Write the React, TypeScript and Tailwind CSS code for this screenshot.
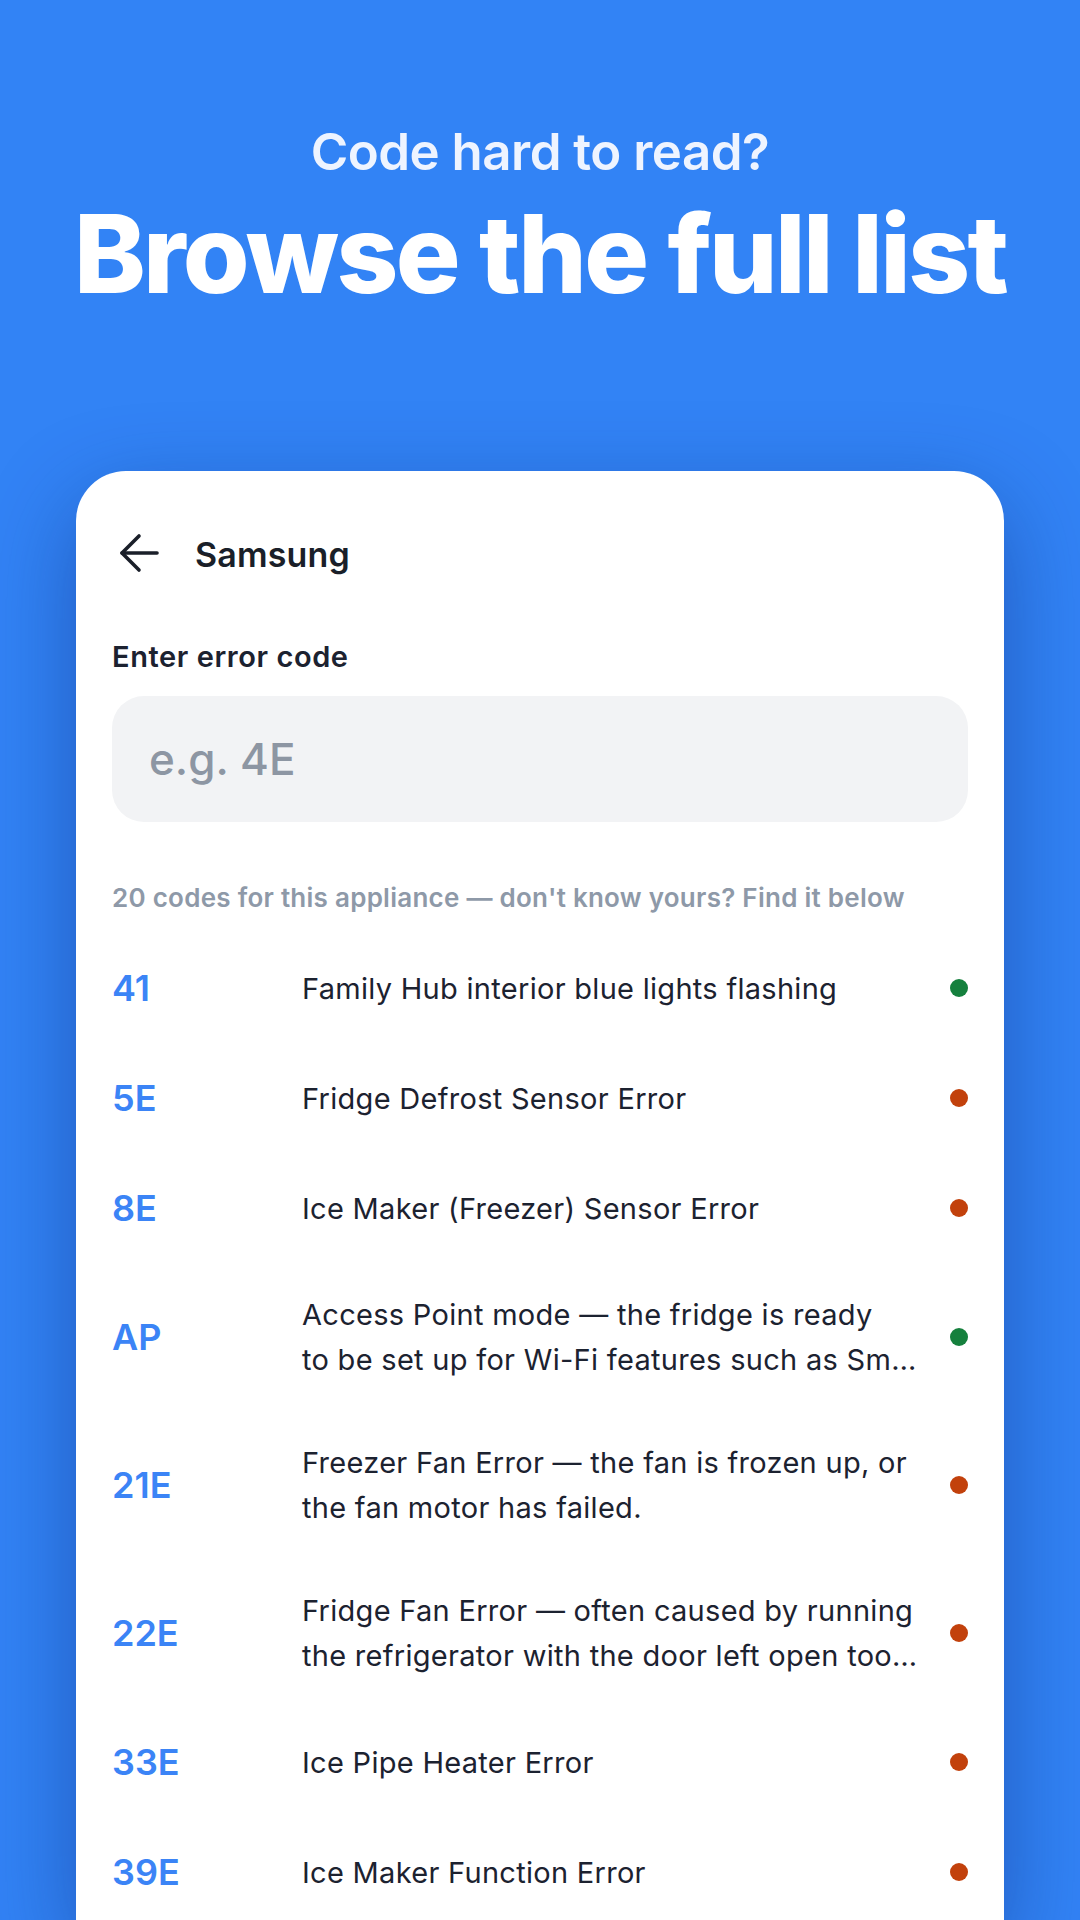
import React from "react";

type Row = { code: string; lines: string[]; ok: boolean };

const rows: Row[] = [
  { code: "41", lines: ["Family Hub interior blue lights flashing"], ok: true },
  { code: "5E", lines: ["Fridge Defrost Sensor Error"], ok: false },
  { code: "8E", lines: ["Ice Maker (Freezer) Sensor Error"], ok: false },
  {
    code: "AP",
    lines: ["Access Point mode — the fridge is ready", "to be set up for Wi-Fi features such as Sm…"],
    ok: true,
  },
  {
    code: "21E",
    lines: ["Freezer Fan Error — the fan is frozen up, or", "the fan motor has failed."],
    ok: false,
  },
  {
    code: "22E",
    lines: ["Fridge Fan Error — often caused by running", "the refrigerator with the door left open too…"],
    ok: false,
  },
  { code: "33E", lines: ["Ice Pipe Heater Error"], ok: false },
  { code: "39E", lines: ["Ice Maker Function Error"], ok: false },
];

export default function App() {
  return (
    <div className="w-[1080px] h-[1920px] overflow-hidden bg-[#3283f5] flex flex-col items-center font-['Inter',sans-serif]">
      <p className="mt-[122px] text-[51px] leading-[60px] font-semibold text-[#eef4ff] tracking-[-0.01em]">
        Code hard to read?
      </p>
      <h1 className="mt-[12px] text-[108px] leading-[120px] font-extrabold text-white tracking-[-0.024em] whitespace-nowrap">
        Browse the full list
      </h1>
      <div className="mt-[157px] w-[928px] flex-1 rounded-t-[50px] bg-white shadow-[0_30px_90px_rgba(10,40,120,0.45)] px-[36px] pt-[60px] flex flex-col">
        <div className="flex items-center h-[48px]">
          <svg width="48" height="48" viewBox="0 0 48 48" fill="none" stroke="#1a1f29" strokeWidth="3.6" strokeLinecap="round" strokeLinejoin="round">
            <path d="M10 22 H45" />
            <path d="M27 5 L10 22 L27 39" />
          </svg>
          <span className="ml-[35px] text-[34px] font-semibold text-[#1a1f29] leading-[48px] tracking-[0.005em]">Samsung</span>
        </div>
        <p className="mt-[60px] text-[29px] leading-[36px] font-semibold text-[#1c2230] tracking-[0.02em]">Enter error code</p>
        <div className="mt-[21px] h-[126px] rounded-[32px] bg-[#f2f3f5] flex items-center pl-[37px]">
          <span className="text-[44px] font-medium text-[#8d96a3]">e.g. 4E</span>
        </div>
        <p className="mt-[59px] text-[26px] leading-[34px] font-semibold text-[#8e99a8] whitespace-nowrap tracking-[0.01em]">
          20 codes for this appliance — don't know yours? Find it below
        </p>
        <div className="mt-[18px] flex flex-col">
          {rows.map((r) => (
            <div key={r.code} className="flex items-center py-[29px]">
              <span className="w-[190px] shrink-0 text-[36px] leading-[52px] font-semibold text-[#3b84f6]">{r.code}</span>
              <div className="flex-1 flex flex-col text-[29px] leading-[45px] text-[#1c2230] whitespace-nowrap tracking-[0.01em]">
                {r.lines.map((l, i) => (
                  <span key={i}>{l}</span>
                ))}
              </div>
              <span className={`ml-[20px] w-[18px] h-[18px] rounded-full shrink-0 ${r.ok ? "bg-[#15803d]" : "bg-[#c2410c]"}`} />
            </div>
          ))}
        </div>
      </div>
    </div>
  );
}
